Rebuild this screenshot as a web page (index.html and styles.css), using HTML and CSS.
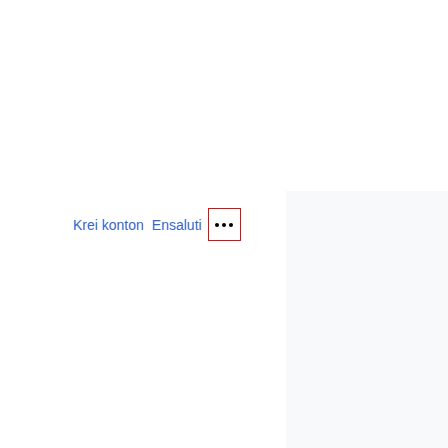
FILE: index.html
```html
<!DOCTYPE html>
<html lang="eo">
<head>
<meta charset="utf-8">
<link rel="stylesheet" href="styles.css">
</head>
<body>
<div class="page">
  <div class="main">
    <nav class="user-links">
      <a class="link" href="#">Krei konton</a>
      <a class="link" href="#">Ensaluti</a>
      <button class="more" type="button" aria-label="Pliaj opcioj">
        <svg width="18" height="4" viewBox="0 0 18 4"><circle cx="2" cy="2" r="2" fill="#000"/><circle cx="9" cy="2" r="2" fill="#000"/><circle cx="16" cy="2" r="2" fill="#000"/></svg>
      </button>
    </nav>
  </div>
  <aside class="side"></aside>
</div>
</body>
</html>
```
FILE: styles.css
```css
html, body { margin: 0; padding: 0; background: #fff; }
body { font-family: "Liberation Sans", Arial, sans-serif; }
.page {
  display: grid;
  grid-template-columns: 286px 1fr;
  height: 448px;
  padding-top: 191px;
  box-sizing: border-box;
}
.main { padding: 17px 0 0 73px; }
.user-links {
  display: flex;
  align-items: center;
  height: 33px;
}
.link {
  color: #36c;
  text-decoration: none;
  font-size: 14px;
  line-height: 16px;
  margin-right: 8px;
}
.link + .link { margin-right: 6px; }
.more {
  width: 33px;
  height: 33px;
  border: 1px solid #f00;
  background: transparent;
  padding: 0;
  display: flex;
  align-items: center;
  justify-content: center;
  box-sizing: border-box;
  flex: none;
}
.more svg { display: block; }
.side { background: #f8f9fa; }
```
